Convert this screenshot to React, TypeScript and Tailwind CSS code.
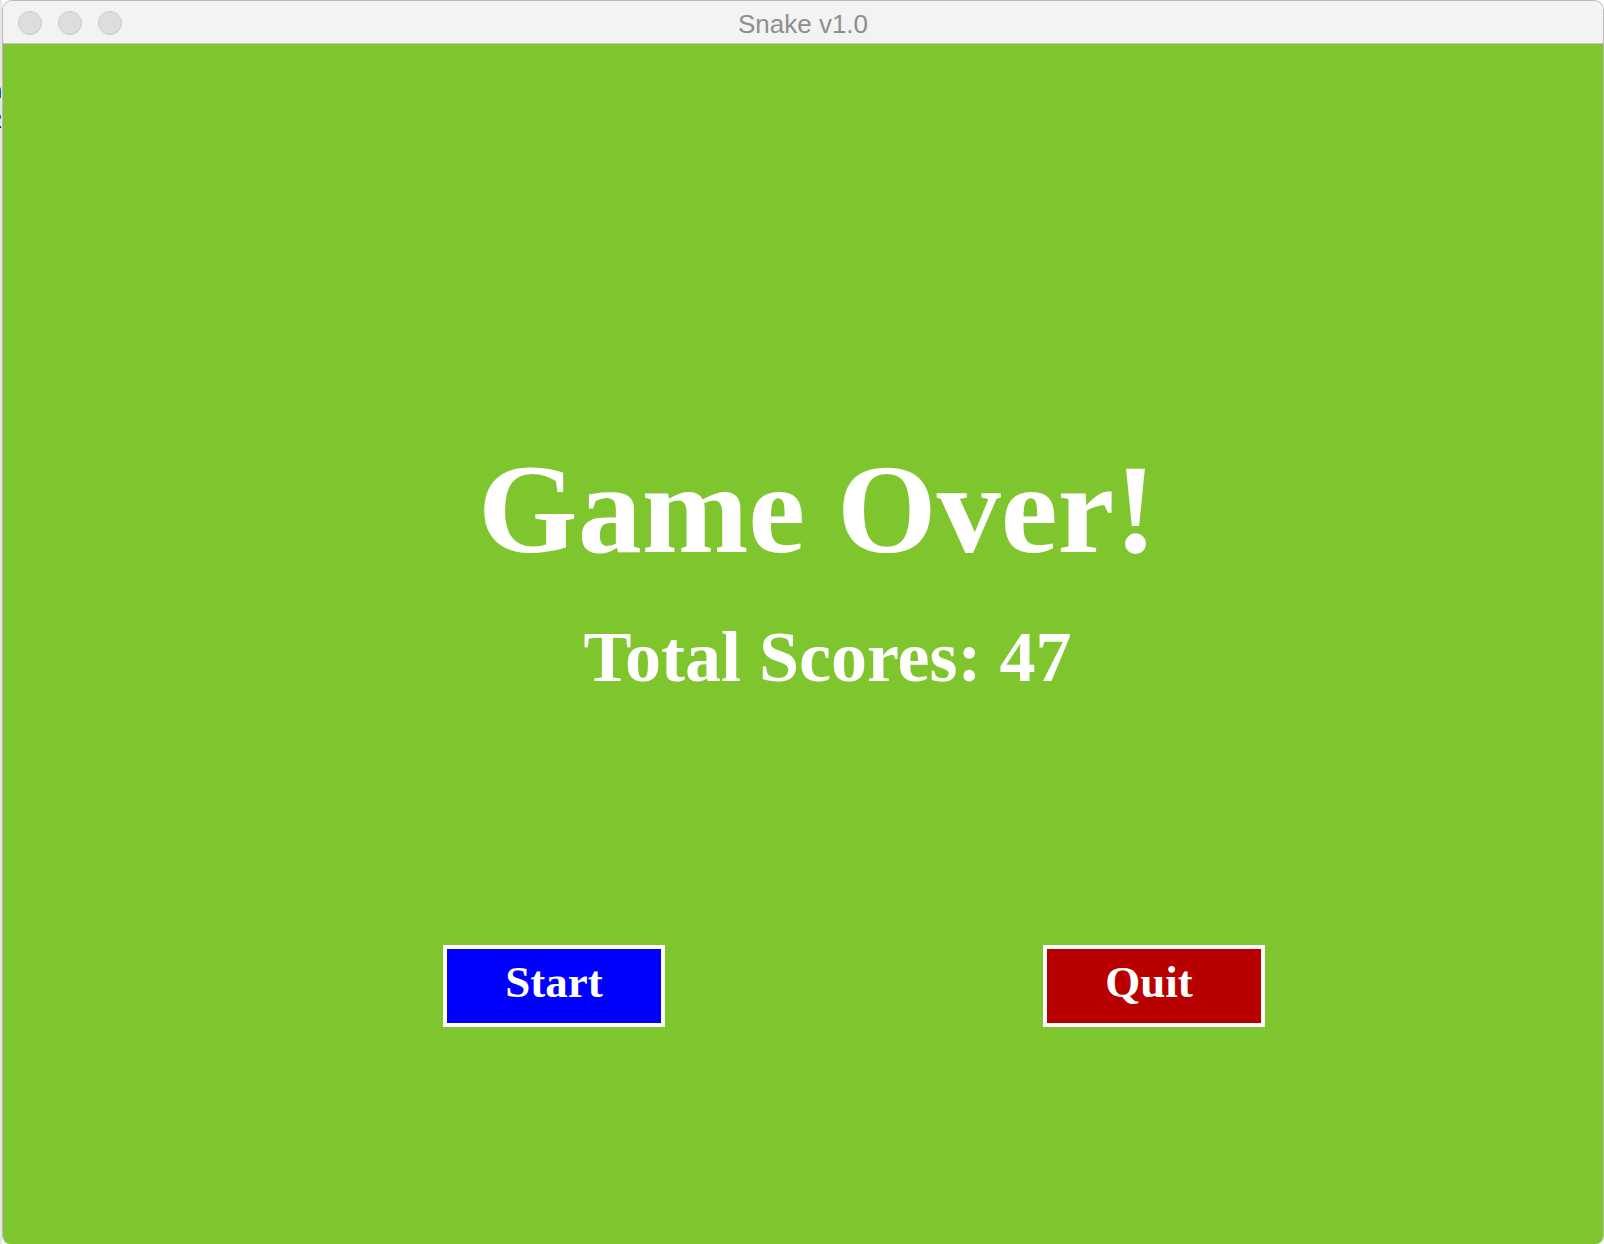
import React from 'react';

const SERIF = "font-['Liberation_Serif','Times_New_Roman',serif]";

function TrafficLight() {
  return <span className="block h-[24px] w-[24px] rounded-full bg-[#dddddd] border border-[#cbcbcb]" />;
}

function GameButton({ label, color, shift }: { label: string; color: string; shift: string }) {
  return (
    <button
      className={`flex h-[82px] w-[222px] items-center justify-center border-4 border-white pb-[7px] ${color} ${shift}`}
    >
      <span className={`${SERIF} text-[45px] font-bold leading-none text-white`}>{label}</span>
    </button>
  );
}

export default function App() {
  return (
    <div className="flex h-[1244px] w-[1604px] overflow-hidden bg-white">
      {/* sliver of the window behind */}
      <div className="w-[2px] overflow-hidden bg-[#e6e6e6]">
        <div className="flex w-[2px] flex-col items-end pt-[76px] font-['Liberation_Sans',sans-serif] text-[22px] leading-[30px] text-black">
          <span>n</span>
          <span>2</span>
        </div>
      </div>

      <div className="flex w-[1602px] flex-col overflow-hidden rounded-t-[10px] rounded-b-[8px] border-x border-t border-[#b9b9b9]">
        {/* title bar */}
        <div className="relative flex h-[43px] items-center border-b border-[#c4c4c4] bg-[#f3f3f3] pl-[15px] pt-[2px]">
          <div className="flex gap-[16px]">
            <TrafficLight />
            <TrafficLight />
            <TrafficLight />
          </div>
          <div className="absolute inset-0 flex items-center justify-center pt-[5px] font-['Liberation_Sans',Arial,sans-serif] text-[26px] text-[#8e8e8e]">
            Snake v1.0
          </div>
        </div>

        {/* game canvas */}
        <div className="flex h-[1200px] flex-col bg-[#7fc52e] pt-[401px]">
          <h1 className={`${SERIF} self-center pl-[29px] text-[128px] font-bold leading-none text-white`}>Game Over!</h1>
          <p className={`${SERIF} mt-[48px] self-center pl-[49px] text-[72px] font-bold leading-none text-white`}>
            Total Scores: 47
          </p>
          <div className="mt-[252px] flex gap-[378px] pl-[440px]">
            <GameButton label="Start" color="bg-[#0000ff]" shift="" />
            <GameButton label="Quit" color="bg-[#b80000]" shift="pr-[10px]" />
          </div>
        </div>
      </div>
    </div>
  );
}
